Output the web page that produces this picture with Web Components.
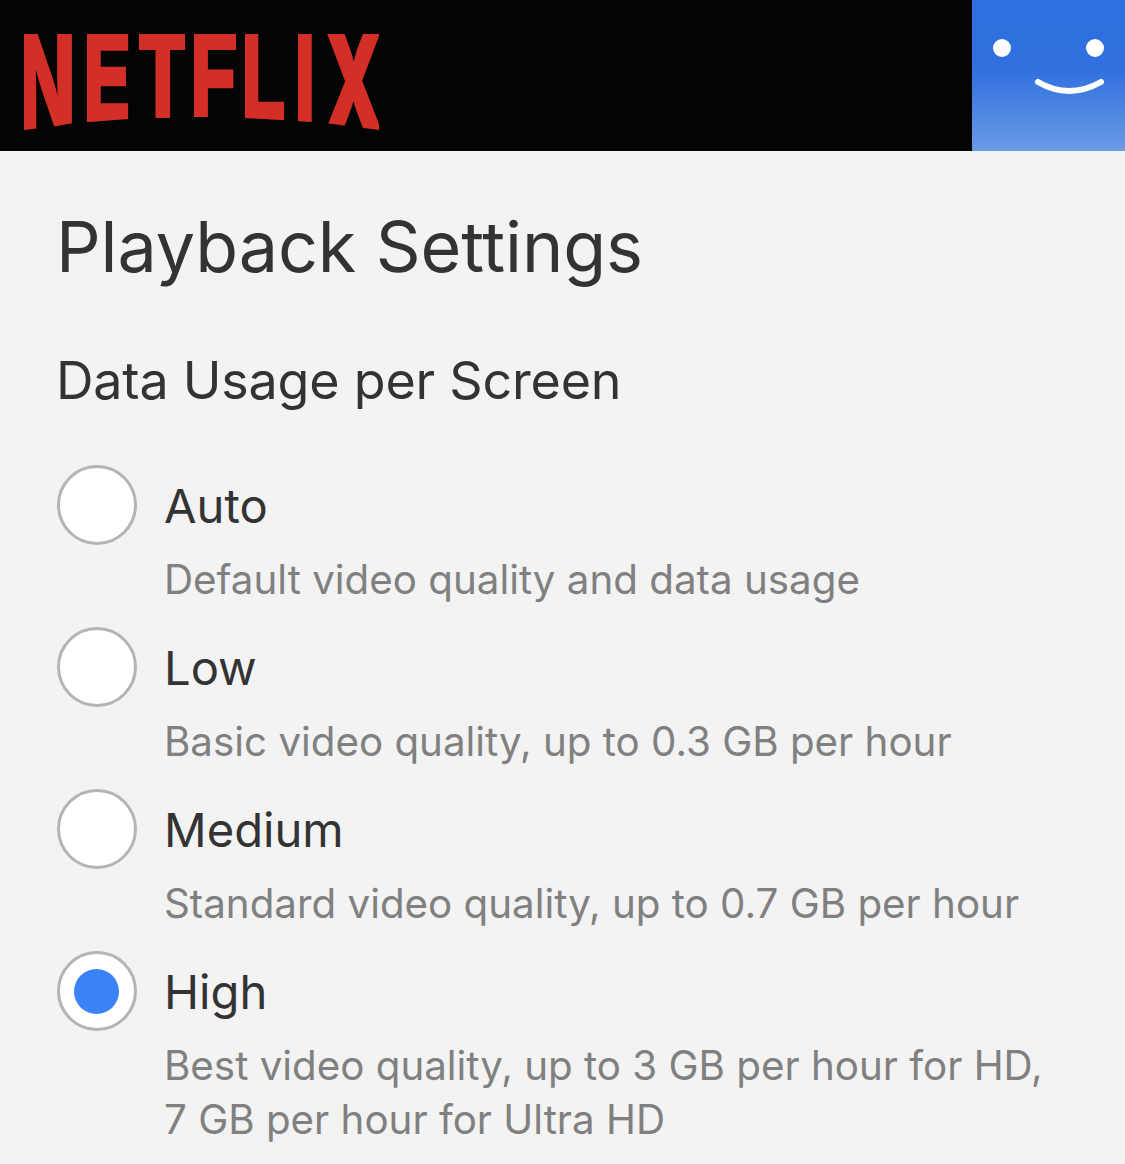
<!DOCTYPE html>
<html>
<head>
<meta charset="utf-8">
<style>
  html, body { margin: 0; background: #f3f3f3; }
  body { font-family: Inter, Roboto, sans-serif; width: 1125px; height: 1164px; overflow: hidden; }
</style>
</head>
<body>
<nf-header></nf-header>
<playback-settings>
  <span slot="title">Playback Settings</span>
  <span slot="heading">Data Usage per Screen</span>
  <plan-option label="Auto">Default video quality and data usage</plan-option>
  <plan-option label="Low">Basic video quality, up to 0.3 GB per hour</plan-option>
  <plan-option label="Medium">Standard video quality, up to 0.7 GB per hour</plan-option>
  <plan-option label="High" checked>Best video quality, up to 3 GB per hour for HD,<br>7 GB per hour for Ultra HD</plan-option>
</playback-settings>

<script>
const letters = [
  // ch, box width, margin-left, scale x, scale y, glyph shift, clip polygon
  ["N", 49, 24, 0.60, 1.09, -6, "0 0,49px 0,49px 89px,33px 92px,0 96px"],
  ["E", 42, 14, 0.66, 0.99, -6, "0 0,42px 0,42px 85px,0 88px"],
  ["T", 46, 10, 0.61, 0.96, -2, "0 0,46px 0,46px 84px,0 84px"],
  ["F", 42, 9, 0.70, 0.95, -7, "0 0,42px 0,42px 83px,0 83px"],
  ["L", 41, 9, 0.68, 0.97, -7, "0 0,41px 0,41px 86px,0 84px"],
  ["I", 16, 12, 0.66, 0.99, -6, "0 0,16px 0,16px 88px,0 87px"],
  ["X", 54, 11, 0.62, 1.09, -1, "0 0,54px 0,54px 96px,0 89px"],
];

class NfHeader extends HTMLElement {
  constructor() {
    super();
    const root = this.attachShadow({ mode: "open" });
    root.innerHTML = `
      <style>
        :host { display: flex; height: 151px; background: #040404; justify-content: space-between; }
        .logo { display: block; padding-top: 34px; white-space: nowrap; font-size: 0; }
        .box { display: inline-block; height: 100px; vertical-align: top; }
        .ch { display: inline-block; font: 800 125px/100px Inter, sans-serif; color: #d32f27;
              -webkit-text-stroke: 2.5px #d32f27; transform-origin: 0 0; }
        .avatar { width: 153px; height: 151px; background: linear-gradient(#2e6fdf 0%, #2f70de 45%, #6a9be6 100%); }
        svg { display: block; }
      </style>
      <div class="logo"></div>
      <div class="avatar">
        <svg width="153" height="151" viewBox="0 0 153 151">
          <circle cx="30" cy="48" r="9" fill="#fff"/>
          <circle cx="123" cy="48" r="9" fill="#fff"/>
          <path d="M66 82 Q97 100 129 82" fill="none" stroke="#fff" stroke-width="6" stroke-linecap="round"/>
        </svg>
      </div>`;
    const logo = root.querySelector(".logo");
    for (const [ch, w, ml, sx, sy, dx, clip] of letters) {
      const box = document.createElement("span");
      box.className = "box";
      box.style.cssText = `width:${w}px;margin-left:${ml}px;clip-path:polygon(${clip})`;
      const g = document.createElement("span");
      g.className = "ch";
      g.textContent = ch;
      g.style.transform = `translate(${dx}px,-6px) scale(${sx},${sy})`;
      box.append(g);
      logo.append(box);
    }
  }
}
customElements.define("nf-header", NfHeader);

class PlaybackSettings extends HTMLElement {
  constructor() {
    super();
    this.attachShadow({ mode: "open" }).innerHTML = `
      <style>
        :host { display: block; padding: 56px 0 0 56px; color: #333; }
        h1 { margin: 0 0 54px 0; font: 400 70px/80px Inter, sans-serif; letter-spacing: -0.1px; }
        h2 { margin: 0 0 44px; font: 400 52px/80px Inter, sans-serif; letter-spacing: -0.2px; }
        .list { display: block; margin-left: 0.5px; }
      </style>
      <h1><slot name="title"></slot></h1>
      <h2><slot name="heading"></slot></h2>
      <div class="list"><slot></slot></div>`;
  }
}
customElements.define("playback-settings", PlaybackSettings);

class PlanOption extends HTMLElement {
  constructor() {
    super();
    const root = this.attachShadow({ mode: "open" });
    root.innerHTML = `
      <style>
        :host { display: grid; grid-template-columns: 80px 1fr; column-gap: 27.5px; height: 162px; align-content: start; }
        .radio { width: 80px; height: 80px; box-sizing: border-box; border: 3px solid #b4b4b4; border-radius: 50%;
                 background: #fff; display: flex; align-items: center; justify-content: center; }
        .dot { width: 45px; height: 45px; border-radius: 50%; background: #3b82f6; }
        .label { font: 400 47.2px/82px Inter, sans-serif; color: #333; height: 80px; }
        .desc { grid-column: 2; margin-top: 8px; font: 400 40.3px/54px Inter, sans-serif; color: #808080; white-space: nowrap; }
      </style>
      <div class="radio"></div>
      <div class="label"></div>
      <div class="desc"><slot></slot></div>`;
    root.querySelector(".label").textContent = this.getAttribute("label");
    if (this.hasAttribute("checked")) {
      const dot = document.createElement("div");
      dot.className = "dot";
      root.querySelector(".radio").append(dot);
    }
  }
}
customElements.define("plan-option", PlanOption);
</script>
</body>
</html>
